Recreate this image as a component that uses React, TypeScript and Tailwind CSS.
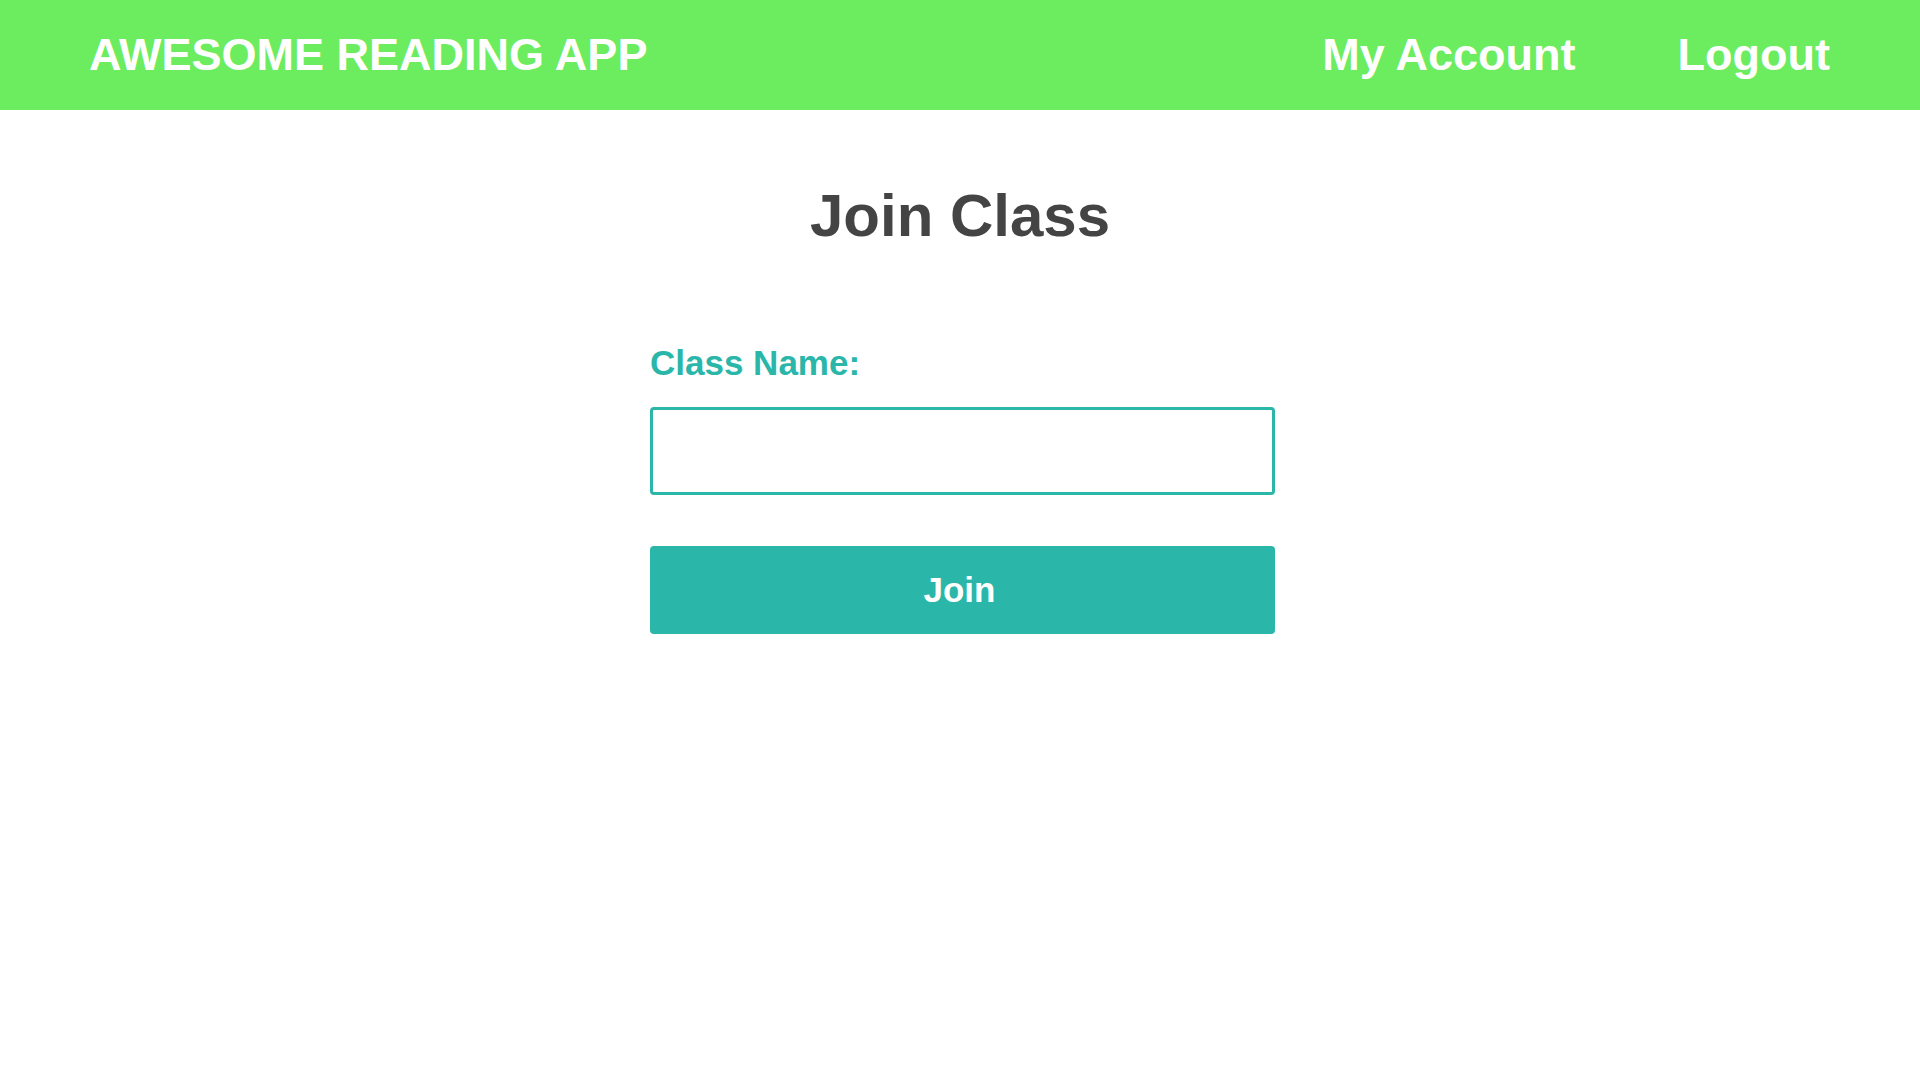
export default function App() {
    return (
        <div className="min-h-screen bg-white font-['Liberation_Sans',Arial,sans-serif] leading-[normal]">
            <header className="flex h-[110px] items-center justify-between bg-[#6cec5f] pl-[89px] pr-[90px]">
                <h1 className="text-[45px] font-bold text-white">AWESOME READING APP</h1>
                <nav className="flex items-center gap-[102px] text-[45px] font-bold text-white">
                    <a href="#">My Account</a>
                    <a href="#">Logout</a>
                </nav>
            </header>

            <main className="flex flex-col items-center pt-[71px]">
                <h2 className="text-[60px] font-bold text-[#444444]">Join Class</h2>

                <form className="ml-[5px] mt-[93px] flex w-[625px] flex-col" onSubmit={(e) => e.preventDefault()}>
                    <label htmlFor="className" className="text-[35px] font-bold text-[#2ab6a9]">
                        Class Name:
                    </label>
                    <input
                        id="className"
                        type="text"
                        className="mt-[24px] h-[88px] rounded-[4px] border-[3px] border-[#2ab6a9] px-4 text-[30px] outline-none"
                    />
                    <button
                        type="submit"
                        className="mt-[51px] h-[88px] rounded-[4px] bg-[#2ab6a9] pr-[6px] text-[35px] font-bold text-white"
                    >
                        Join
                    </button>
                </form>
            </main>
        </div>
    );
}
